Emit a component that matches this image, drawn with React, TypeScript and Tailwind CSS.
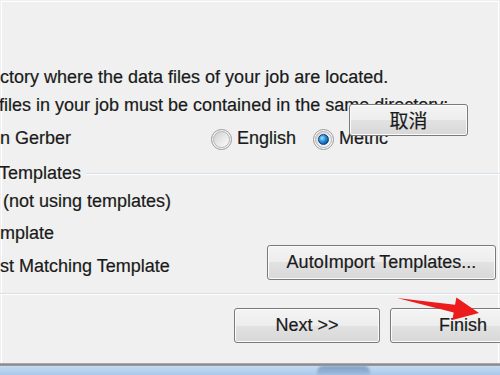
import React from "react";

const btn =
  "flex items-center justify-center shrink-0 rounded-[3px] border border-[#7a7a7a] bg-[linear-gradient(to_bottom,#f4f4f4_0%,#ededed_50%,#e2e2e2_50%,#d8d8d8_100%)] shadow-[inset_0_0_0_1px_#fbfbfb] text-[18px] text-[#1a1a1a]";

function Radio({ checked }: { checked?: boolean }) {
  return (
    <div className="w-[21px] h-[21px] rounded-full border border-[#9a9a9a] bg-[#f4f4f4] flex items-center justify-center shrink-0 mt-[3px]">
      <div className="w-[17px] h-[17px] rounded-full border border-[#b5b5b5] bg-[linear-gradient(135deg,#cdcdcd_0%,#e8e8e8_50%,#fbfbfb_100%)] flex items-center justify-center">
        {checked && (
          <div className="w-[11px] h-[11px] rounded-full bg-[radial-gradient(circle_at_35%_35%,#a6e0ff_0%,#2a93e0_40%,#0b56a6_75%,#07305f_100%)] border border-[#0c3f74]" />
        )}
      </div>
    </div>
  );
}

export default function App() {
  return (
    <div className="relative w-[500px] h-[375px] overflow-hidden bg-[#f0f0f0] flex flex-col font-['Liberation_Sans',Arial,sans-serif] text-[18px] text-[#1a1a1a] [-webkit-text-stroke:0.2px_#1a1a1a]">
      <div className="pt-px px-px flex-1 flex flex-col min-h-0">
        <div className="flex-1 border-t border-l border-r border-white flex flex-col min-h-0">
          <div className="-ml-[2px] -mr-[2px] pt-[61px] flex flex-col whitespace-nowrap">
            <div className="h-[28px] leading-[28px]">
              ctory where the data files of your job are located.
            </div>
            <div className="h-[28px] leading-[28px] -ml-[1px]">
              files in your job must be contained in the same directory:
            </div>
            <div className="mt-[5px] h-[28px] leading-[28px] flex items-center">
              <span className="w-[211px] shrink-0">n Gerber</span>
              <Radio />
              <span className="w-[81px] shrink-0 pl-[5px]">English</span>
              <Radio checked />
              <span className="pl-[5px]">Metric</span>
            </div>
            <div className="mt-[7px] h-[28px] leading-[28px] flex items-center">
              <span className="-ml-[1px]">Templates</span>
              <div className="flex-1 ml-[5px] h-[2px] border-t border-[#d5dfe5] border-b border-b-white mt-[1px]" />
            </div>
            <div className="h-[28px] leading-[28px] pl-[3px]">(not using templates)</div>
            <div className="mt-[4px] h-[28px] leading-[28px]">mplate</div>
            <div className="-mt-[2px] h-[35px] flex">
              <span className="w-[267px] shrink-0 mt-[7px] leading-[28px]">st Matching Template</span>
              <div className={`${btn} w-[229px] h-[35px]`}>AutoImport Templates...</div>
            </div>
            <div className="mt-[13px] h-[2px] border-t border-[#d5dfe5] border-b border-b-white" />
            <div className="mt-[13px] flex pl-[234px] gap-[10px]">
              <div className={`${btn} w-[146px] h-[35px]`}>Next &gt;&gt;</div>
              <div className={`${btn} w-[146px] h-[35px]`}>Finish</div>
            </div>
          </div>
        </div>
      </div>
      <div className="h-[3px] bg-[linear-gradient(to_bottom,#b4b4b4,#8c8c8c,#9e9e9e)]" />
      <div className="h-[9px] bg-[linear-gradient(to_bottom,#c3dbf3,#a9c8ea)] flex pl-[317px]">
        <div className="w-[53px] h-full rounded-t-[6px] bg-[linear-gradient(to_bottom,#7f9dc0,#9fbde0)] blur-[1px]" />
      </div>

      <div
        className={`absolute left-[349px] top-[104px] w-[119px] h-[32px] ${btn} font-['Noto_Sans_CJK_SC','Liberation_Sans',sans-serif] text-[19px]`}
      >
        取消
      </div>

      <svg className="absolute left-0 top-0 pointer-events-none" width="500" height="375">
        <polygon
          points="397,298 455,304.7 456.4,297.5 479,313 452.4,320 453.7,312.5"
          fill="#ec1c1c"
        />
      </svg>
    </div>
  );
}
